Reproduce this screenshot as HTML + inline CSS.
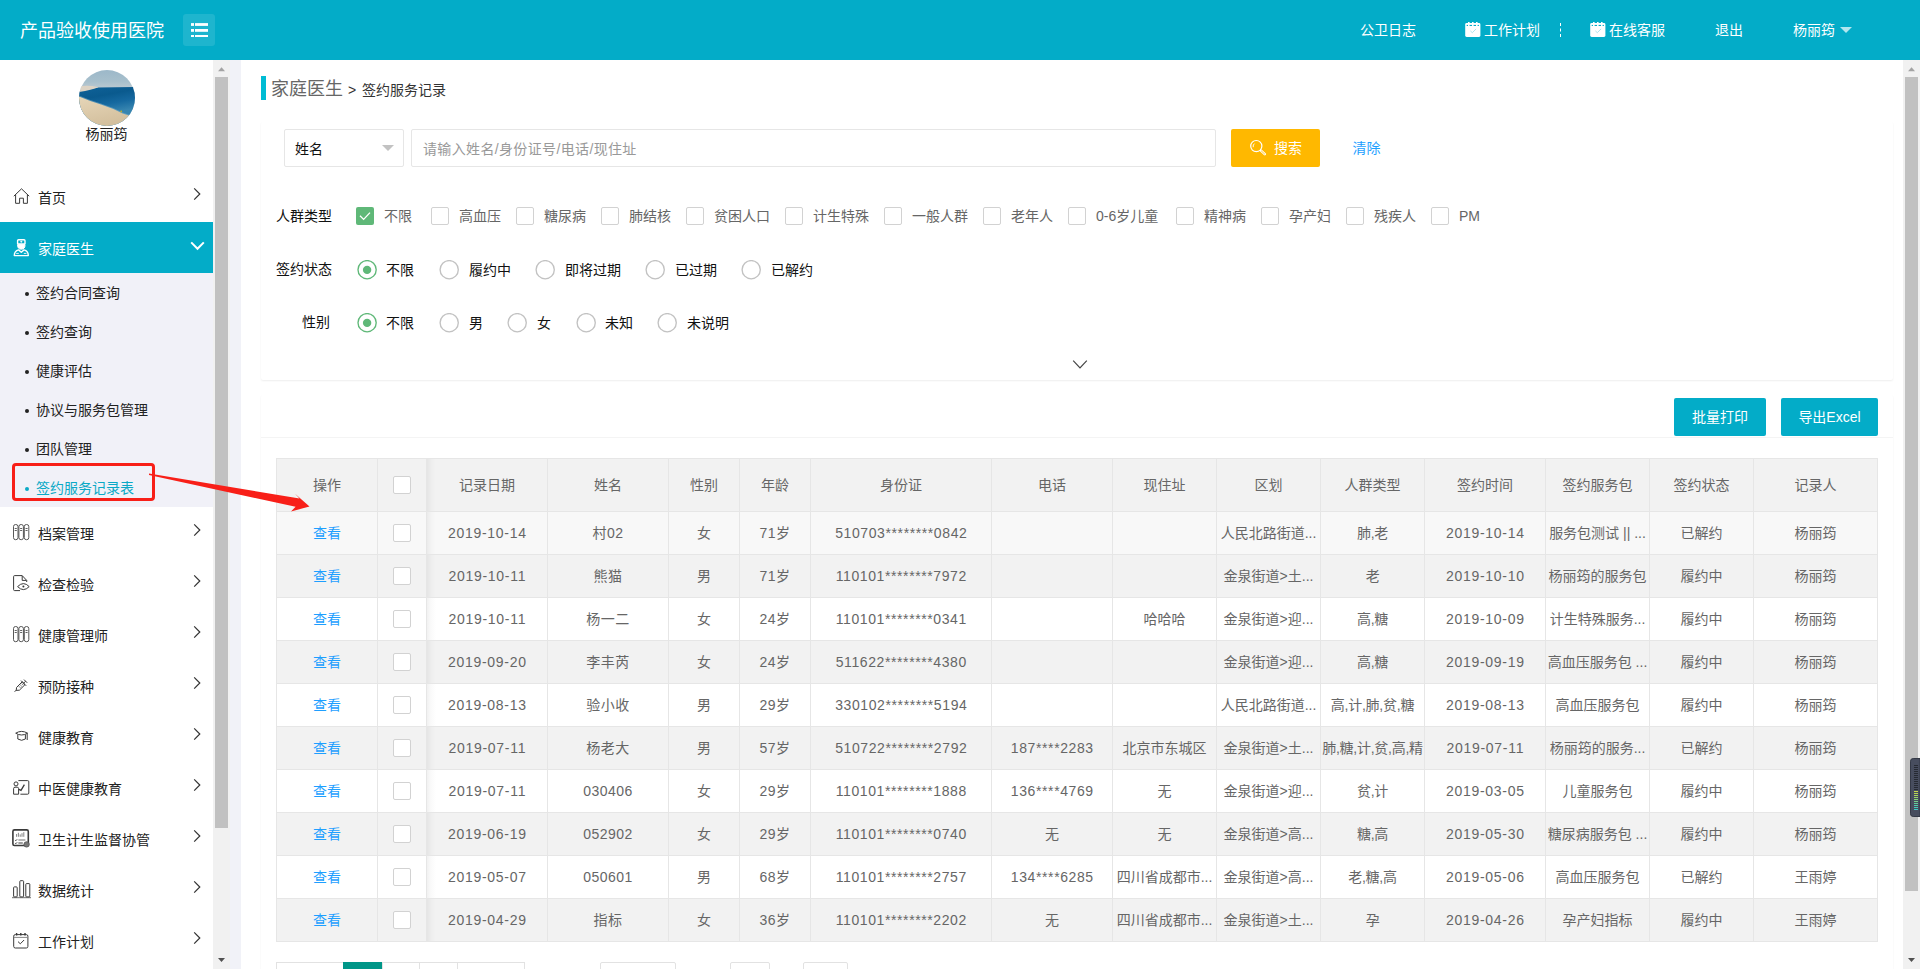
<!DOCTYPE html>
<html lang="zh-CN"><head><meta charset="utf-8"><title>签约服务记录</title>
<style>
*{box-sizing:border-box;margin:0;padding:0}
html,body{width:1920px;height:969px;overflow:hidden;background:#fff}
body{font-family:"Liberation Sans","Noto Sans CJK SC",sans-serif;font-size:14px;color:#666;position:relative}
.abs{position:absolute}
.t{position:absolute;white-space:nowrap;line-height:20px;height:20px}
#hdr{position:absolute;left:0;top:0;width:1920px;height:60px;background:#03acc8;color:#fff}
#side{position:absolute;left:0;top:60px;width:213px;height:909px;background:#fff;overflow:hidden}
.sb{position:absolute;top:60px;width:17px;height:909px;background:#f1f1f1}
.sb .th{position:absolute;left:2px;width:13px;background:#c1c1c1}
.sb svg{position:absolute;left:0}
.hl{height:1px;background:#e6e6e6}
.vl{width:1px;background:#e6e6e6}
.c{position:absolute;text-align:center;white-space:nowrap;color:#666;font-size:14px}
.c.lk{color:#1e9fff}
.c.n{letter-spacing:.45px}
.c.tg{letter-spacing:-.25px}
.c.n7{letter-spacing:.7px;text-indent:.7px}
.c.n6{letter-spacing:.6px;text-indent:.6px}
.cb{width:18px;height:18px;border:1px solid #d2d2d2;border-radius:2px;background:#fff}
.pgi{height:30px;line-height:30px;padding-top:1px;text-align:center;font-size:12px;overflow:hidden}
.card{background:#fff;border-radius:2px;box-shadow:0 1px 2px 0 rgba(0,0,0,.07)}
.inp{border:1px solid #e6e6e6;border-radius:2px;background:#fff}
.btn{height:38px;line-height:38px;background:#03acc8;color:#fff;text-align:center;border-radius:2px;font-size:14px}
</style></head><body>
<div id="hdr"><div class="t" style="left:20px;top:18px;font-size:18px;line-height:26px;height:26px">产品验收使用医院</div><div class="abs" style="left:183px;top:14px;width:32px;height:32px;border-radius:3px;background:rgba(255,255,255,.11)"><svg class="abs" style="left:8px;top:9px" width="17" height="14" viewBox="0 0 17 14"><g fill="#fff"><rect x="0" y="0.1" width="3" height="2.8"/><rect x="4" y="0.1" width="13" height="2.8"/><rect x="0" y="6" width="3" height="2.8"/><rect x="4" y="6" width="13" height="2.8"/><rect x="0" y="12" width="3" height="2"/><rect x="4" y="12" width="13" height="2"/></g></svg></div><div class="t" style="left:1360px;top:20px">公卫日志</div><svg class="abs" style="left:1465px;top:22px" width="16" height="15" viewBox="0 0 16 15"><rect x="0.2" y="1" width="15.2" height="14" rx="1.4" fill="#fff"/><g fill="#fff"><rect x="3" y="0" width="1.6" height="2"/><rect x="7" y="0" width="1.6" height="2"/><rect x="11" y="0" width="1.6" height="2"/></g><g fill="#03acc8"><rect x="1.7" y="2.9" width="1.3" height="1.1"/><rect x="4.6" y="2.9" width="2.4" height="1.1"/><rect x="8.6" y="2.9" width="2.4" height="1.1"/><rect x="12.6" y="2.9" width="1.3" height="1.1"/></g><path d="M5.4 8.9l1.9 1.8 3.8-3.8" fill="none" stroke="#a5e0ec" stroke-width="0.9"/></svg><div class="t" style="left:1484px;top:20px">工作计划</div><div class="abs" style="left:1560px;top:23px;width:0;height:14px;border-left:1px dashed #fff"></div><svg class="abs" style="left:1590px;top:22px" width="16" height="15" viewBox="0 0 16 15"><rect x="0.2" y="1" width="15.2" height="14" rx="1.4" fill="#fff"/><g fill="#fff"><rect x="3" y="0" width="1.6" height="2"/><rect x="7" y="0" width="1.6" height="2"/><rect x="11" y="0" width="1.6" height="2"/></g><g fill="#03acc8"><rect x="1.7" y="2.9" width="1.3" height="1.1"/><rect x="4.6" y="2.9" width="2.4" height="1.1"/><rect x="8.6" y="2.9" width="2.4" height="1.1"/><rect x="12.6" y="2.9" width="1.3" height="1.1"/></g><path d="M5.4 8.9l1.9 1.8 3.8-3.8" fill="none" stroke="#a5e0ec" stroke-width="0.9"/></svg><div class="t" style="left:1609px;top:20px">在线客服</div><div class="t" style="left:1715px;top:20px">退出</div><div class="t" style="left:1793px;top:20px">杨丽筠</div><div class="abs" style="left:1840px;top:27px;width:0;height:0;border:6px solid transparent;border-bottom-width:0;border-top:6px solid rgba(255,255,255,.7)"></div></div>
<div id="side"><svg class="abs" style="left:79px;top:10px" width="56" height="56" viewBox="0 0 56 56"><defs><clipPath id="av"><circle cx="28" cy="28" r="28"/></clipPath><linearGradient id="sky" x1="0" y1="0" x2="0" y2="1"><stop offset="0" stop-color="#9cb8c9"/><stop offset="0.2" stop-color="#a7bfcc"/><stop offset="0.31" stop-color="#b9c8d0"/><stop offset="1" stop-color="#b9c8d0"/></linearGradient><linearGradient id="sea" gradientUnits="userSpaceOnUse" x1="0" y1="17" x2="6" y2="48"><stop offset="0" stop-color="#3a8ab2"/><stop offset="0.1" stop-color="#0e6096"/><stop offset="0.4" stop-color="#0a5a8e"/><stop offset="0.7" stop-color="#1669a0"/><stop offset="1" stop-color="#3785b0"/></linearGradient><linearGradient id="sand" x1="0" y1="0" x2="0.4" y2="1"><stop offset="0" stop-color="#e6d6b8"/><stop offset="1" stop-color="#d3bf9d"/></linearGradient></defs><g clip-path="url(#av)"><rect width="56" height="56" fill="url(#sky)"/><path d="M0 21L19 17.6L56 17V56H0Z" fill="url(#sea)"/><path d="M0 16.4Q10 15 19.5 17.3Q13 20 0 22Z" fill="#ddd3c4"/><path d="M0 26.6Q10 31 22 34.6Q34 38.4 43.6 43.6L56 47.6V56H0Z" fill="#7fb0c8" opacity=".55" transform="translate(0.6,-0.9)"/><path d="M0 26.6Q10 31 22 34.6Q34 38.4 43.6 43.6L56 47.6V56H0Z" fill="url(#sand)"/><rect x="41.4" y="40.6" width="1.6" height="1.6" fill="#c2ad22"/></g></svg><div class="t" style="left:0;width:213px;text-align:center;top:64px;color:#222">杨丽筠</div><svg class="abs" style="left:12.6px;top:127.7px" width="17" height="17" viewBox="0 0 17 17" fill="none" stroke="#3a3a3a" stroke-width="1" ><path d="M0.8 8.2L8.5 0.8L16.2 8.2"/><path d="M2.6 6.6V15.3H6.6V10.2H10.4V15.3H14.4V6.6"/></svg><div class="t" style="left:38px;top:127.5px;color:#222">首页</div><svg class="abs" style="left:193px;top:126.5px" width="9" height="14" viewBox="0 0 9 14" fill="none" stroke="#333" stroke-width="1.2"><path d="M1.2 1.4L6.8 7L1.2 12.6"/></svg><div class="abs" style="left:0;top:162px;width:213px;height:51px;background:#03acc8"></div><svg class="abs" style="left:13.2px;top:179.1px" width="17" height="18" viewBox="0 0 17 18" fill="none" stroke="#fff" stroke-width="1.4"><path d="M4.6 5.2V1.8Q4.6 0.8 5.6 0.8H11Q12 0.8 12 1.8V5.2"/><path d="M7.3 2.7h2M8.3 1.8v1.8" stroke-width="0.9"/><path d="M4.6 4.8H12" stroke-width="1.1"/><path d="M4.6 5.6Q4.4 10.2 8.3 10.2Q12.2 10.2 12 5.6Z" fill="#fff" stroke-width="1"/><path d="M1.3 16.6Q1.3 12 5.6 10.9L8.3 13.2L11 10.9Q15.3 12 15.3 16.6Z" stroke-linejoin="round"/><path d="M3.2 14.4h2.6M10.8 14.4h2.6" stroke-width="0.9"/></svg><div class="t" style="left:38px;top:178.5px;color:#fff">家庭医生</div><svg class="abs" style="left:190px;top:180.5px" width="15" height="10" viewBox="0 0 15 10" fill="none" stroke="#fff" stroke-width="2"><path d="M1.2 1.4L7.5 7.8L13.8 1.4"/></svg><div class="abs" style="left:0;top:213px;width:213px;height:234px;background:#f1f1f8"></div><div class="abs" style="left:25px;top:232px;width:4px;height:4px;border-radius:2px;background:#222"></div><div class="t" style="left:36px;top:223px;color:#222">签约合同查询</div><div class="abs" style="left:25px;top:271px;width:4px;height:4px;border-radius:2px;background:#222"></div><div class="t" style="left:36px;top:262px;color:#222">签约查询</div><div class="abs" style="left:25px;top:310px;width:4px;height:4px;border-radius:2px;background:#222"></div><div class="t" style="left:36px;top:301px;color:#222">健康评估</div><div class="abs" style="left:25px;top:349px;width:4px;height:4px;border-radius:2px;background:#222"></div><div class="t" style="left:36px;top:340px;color:#222">协议与服务包管理</div><div class="abs" style="left:25px;top:388px;width:4px;height:4px;border-radius:2px;background:#222"></div><div class="t" style="left:36px;top:379px;color:#222">团队管理</div><div class="abs" style="left:25px;top:427px;width:4px;height:4px;border-radius:2px;background:#0ba9c6"></div><div class="t" style="left:36px;top:418px;color:#0ba9c6">签约服务记录表</div><svg class="abs" style="left:12.8px;top:463.9px" width="17" height="17" viewBox="0 0 17 17" fill="none" stroke="#3a3a3a" stroke-width="1" ><g stroke-width="0.85" stroke="#3a3a3a"><rect x="0.5" y="0.5" width="4.5" height="15.2" rx="2.1"/><rect x="5.9" y="0.5" width="4.5" height="15.2" rx="2.1"/><rect x="11.3" y="0.5" width="4.5" height="15.2" rx="2.1"/><path d="M1.7 4.5h2.1M1.7 6.5h2.1M7.1 4.5h2.1M7.1 6.5h2.1M12.5 4.5h2.1M12.5 6.5h2.1" stroke-width="0.8"/></g></svg><div class="t" style="left:38px;top:463.5px;color:#222">档案管理</div><svg class="abs" style="left:193px;top:462.5px" width="9" height="14" viewBox="0 0 9 14" fill="none" stroke="#333" stroke-width="1.2"><path d="M1.2 1.4L6.8 7L1.2 12.6"/></svg><svg class="abs" style="left:12.8px;top:514.9px" width="17" height="17" viewBox="0 0 17 17" fill="none" stroke="#3a3a3a" stroke-width="1" ><path d="M7 15.6H1.6Q0.6 15.6 0.6 14.6V1.6Q0.6 0.6 1.6 0.6H9.2L13.7 5.4V7"/><path d="M9.2 0.8V5.4H13.5"/><path d="M4.6 11.6Q10.4 5.6 16.2 11.6Q10.4 17.6 4.6 11.6Z" stroke-width="1"/><circle cx="10.4" cy="11.6" r="1" fill="#333" stroke="none"/></svg><div class="t" style="left:38px;top:514.5px;color:#222">检查检验</div><svg class="abs" style="left:193px;top:513.5px" width="9" height="14" viewBox="0 0 9 14" fill="none" stroke="#333" stroke-width="1.2"><path d="M1.2 1.4L6.8 7L1.2 12.6"/></svg><svg class="abs" style="left:12.8px;top:565.9px" width="17" height="17" viewBox="0 0 17 17" fill="none" stroke="#3a3a3a" stroke-width="1" ><g stroke-width="0.85" stroke="#3a3a3a"><rect x="0.5" y="0.5" width="4.5" height="15.2" rx="2.1"/><rect x="5.9" y="0.5" width="4.5" height="15.2" rx="2.1"/><rect x="11.3" y="0.5" width="4.5" height="15.2" rx="2.1"/><path d="M1.7 4.5h2.1M1.7 6.5h2.1M7.1 4.5h2.1M7.1 6.5h2.1M12.5 4.5h2.1M12.5 6.5h2.1" stroke-width="0.8"/></g></svg><div class="t" style="left:38px;top:565.5px;color:#222">健康管理师</div><svg class="abs" style="left:193px;top:564.5px" width="9" height="14" viewBox="0 0 9 14" fill="none" stroke="#333" stroke-width="1.2"><path d="M1.2 1.4L6.8 7L1.2 12.6"/></svg><svg class="abs" style="left:13.6px;top:619.1px" width="14" height="14" viewBox="0 0 14 14" fill="none" stroke="#3a3a3a" stroke-width="1" ><path d="M0.6 12.8L2.4 11"/><path d="M2.2 11.4L2.6 8.4L8.2 2.8L11 5.6L5.4 11.2Z"/><path d="M7 1.6L12.2 6.8"/><path d="M9.6 4.2L11.6 2.2"/><path d="M10 0.6L13.2 3.8"/><path d="M5 7.4l1.2 1.2M6.4 6l1.2 1.2M7.8 4.6l1.2 1.2" stroke-width="0.9"/></svg><div class="t" style="left:38px;top:616.5px;color:#222">预防接种</div><svg class="abs" style="left:193px;top:615.5px" width="9" height="14" viewBox="0 0 9 14" fill="none" stroke="#333" stroke-width="1.2"><path d="M1.2 1.4L6.8 7L1.2 12.6"/></svg><svg class="abs" style="left:14.5px;top:670.3px" width="14" height="12" viewBox="0 0 14 12" fill="none" stroke="#3a3a3a" stroke-width="1" ><path d="M0.7 3.2Q6.5 -0.4 12.6 3.2Q6.5 6.8 0.7 3.2Z"/><path d="M2.8 4.6V9Q6.6 11.6 10.4 9V4.6"/><path d="M12.2 3.4V10"/></svg><div class="t" style="left:38px;top:667.5px;color:#222">健康教育</div><svg class="abs" style="left:193px;top:666.5px" width="9" height="14" viewBox="0 0 9 14" fill="none" stroke="#333" stroke-width="1.2"><path d="M1.2 1.4L6.8 7L1.2 12.6"/></svg><svg class="abs" style="left:12.8px;top:720.1px" width="17" height="15" viewBox="0 0 17 15" fill="none" stroke="#3a3a3a" stroke-width="1" ><path d="M5.4 0.6H14.6Q15.8 0.6 15.8 1.8V13Q15.8 14.2 14.6 14.2H7.4"/><circle cx="3" cy="3.9" r="2"/><path d="M0.6 14.2V8.6Q0.6 7.2 2 7.2H4.2Q5.6 7.2 5.6 8.6V14.2Z"/><path d="M5.8 9.4L8 10.4L11.4 4.6" stroke-width="1.3"/></svg><div class="t" style="left:38px;top:718.5px;color:#222">中医健康教育</div><svg class="abs" style="left:193px;top:717.5px" width="9" height="14" viewBox="0 0 9 14" fill="none" stroke="#333" stroke-width="1.2"><path d="M1.2 1.4L6.8 7L1.2 12.6"/></svg><svg class="abs" style="left:11.6px;top:768.9px" width="19" height="19" viewBox="0 0 19 19" fill="none" stroke="#3a3a3a" stroke-width="1" ><rect x="0.9" y="0.9" width="15.4" height="15.6" rx="1.6" stroke-width="1.6"/><path d="M4.6 7.8V5M6.4 7.8V3.8M8.2 7.8V5.4M10 7.8V4.2M11.8 7.8V3.2" stroke-width="0.9" stroke="#777"/><path d="M6.4 11h7" stroke="#999" stroke-width="1.4"/><path d="M3 11l0.9 0.8 1.3-1.6M3 14l0.9 0.8 1.3-1.6" stroke-width="0.8"/><path d="M6.4 14h4.4"/><circle cx="14.6" cy="15.4" r="2.7" fill="#777" stroke="#555" stroke-width="0.8"/></svg><div class="t" style="left:38px;top:769.5px;color:#222">卫生计生监督协管</div><svg class="abs" style="left:193px;top:768.5px" width="9" height="14" viewBox="0 0 9 14" fill="none" stroke="#333" stroke-width="1.2"><path d="M1.2 1.4L6.8 7L1.2 12.6"/></svg><svg class="abs" style="left:12px;top:820.1px" width="19" height="19" viewBox="0 0 19 19" fill="none" stroke="#3a3a3a" stroke-width="1" ><path d="M0 17.6H19" stroke="#888" stroke-width="1.3"/><rect x="1.6" y="6.9" width="3.6" height="10" rx="0.8"/><rect x="7.8" y="0.7" width="3.8" height="16.2" rx="0.8"/><rect x="13.8" y="3.6" width="4" height="13.3" rx="0.8"/></svg><div class="t" style="left:38px;top:820.5px;color:#222">数据统计</div><svg class="abs" style="left:193px;top:819.5px" width="9" height="14" viewBox="0 0 9 14" fill="none" stroke="#333" stroke-width="1.2"><path d="M1.2 1.4L6.8 7L1.2 12.6"/></svg><svg class="abs" style="left:13px;top:873.1px" width="16" height="16" viewBox="0 0 16 16" fill="none" stroke="#3a3a3a" stroke-width="1" ><rect x="0.7" y="1.6" width="14.2" height="13.4" rx="1.6"/><path d="M0.8 4.4H14.8" stroke="#888"/><path d="M3.6 0V2.6M7.8 0V2.6M12 0V2.6" stroke-width="1.4"/><path d="M5 8.6l2.3 2.2 3.8-3.8"/></svg><div class="t" style="left:38px;top:871.5px;color:#222">工作计划</div><svg class="abs" style="left:193px;top:870.5px" width="9" height="14" viewBox="0 0 9 14" fill="none" stroke="#333" stroke-width="1.2"><path d="M1.2 1.4L6.8 7L1.2 12.6"/></svg></div>
<div class="sb" style="left:213px"><svg style="top:6px" width="17" height="6" viewBox="0 0 17 6"><path d="M5 5.2H12L8.5 1.2Z" fill="#a3a3a3"/></svg><div class="th" style="top:17px;height:751px"></div><svg style="bottom:6px" width="17" height="6" viewBox="0 0 17 6"><path d="M5 0.9H12L8.5 4.9Z" fill="#505050"/></svg></div>
<div class="abs" style="left:230px;top:60px;width:11px;height:909px;background:#f1f2f8"></div>
<div class="sb" style="left:1903px"><svg style="top:6px" width="17" height="6" viewBox="0 0 17 6"><path d="M5 5.2H12L8.5 1.2Z" fill="#a3a3a3"/></svg><div class="th" style="top:17px;height:814px"></div><svg style="bottom:6px" width="17" height="6" viewBox="0 0 17 6"><path d="M5 0.9H12L8.5 4.9Z" fill="#505050"/></svg></div>
<div class="abs" style="left:261px;top:76px;width:5px;height:24px;background:#00bcd4"></div><div class="t" style="left:271px;top:76px;font-size:18px;line-height:26px;height:26px;color:#666">家庭医生</div><div class="t" style="left:348px;top:80px;color:#333">&gt;</div><div class="t" style="left:362px;top:80px;color:#333">签约服务记录</div><div class="abs card" style="left:261px;top:122px;width:1632px;height:258px"></div><div class="abs inp" style="left:284px;top:129px;width:120px;height:38px"><div class="t" style="left:10px;top:9px;color:#111">姓名</div><div class="abs" style="left:97px;top:15px;width:0;height:0;border:6px solid transparent;border-bottom-width:0;border-top:6px solid #c2c2c2"></div></div><div class="abs inp" style="left:411px;top:129px;width:805px;height:38px"><div class="t" style="left:11px;top:9px;color:#999;letter-spacing:.355px">请输入姓名/身份证号/电话/现住址</div></div><div class="abs" style="left:1231px;top:129px;width:89px;height:38px;background:#ffb800;border-radius:2px;color:#fff"><svg class="abs" style="left:18px;top:10px" width="19" height="19" viewBox="0 0 19 19" fill="none" stroke="#fff"><circle cx="7.3" cy="7.1" r="5.6" stroke-width="1.2"/><path d="M4.2 8.2Q3.8 5.6 5.6 4.6" stroke-width="0.9"/><path d="M12 11.6L15.8 15.2" stroke-width="2.5" stroke-linecap="round"/><path d="M12.4 12L15.6 15" stroke="#ffb800" stroke-width="0.8" stroke-linecap="round"/></svg><div class="t" style="left:43px;top:9px">搜索</div></div><div class="t" style="left:1352.5px;top:138px;color:#1e9fff">清除</div><div class="t" style="left:276px;top:206px;color:#111">人群类型</div><div class="abs" style="left:356px;top:207px;width:18px;height:18px;border-radius:2px;background:#5fb878"><svg class="abs" style="left:3px;top:4px" width="12" height="10" viewBox="0 0 12 10" fill="none" stroke="#fff" stroke-width="1.3"><path d="M1 4.8L4.6 8.4L11 1.6"/></svg></div><div class="t" style="left:384px;top:206px">不限</div><div class="abs" style="left:431px;top:207px;width:18px;height:18px;border-radius:2px;border:1px solid #d2d2d2;background:#fff"></div><div class="t" style="left:459px;top:206px">高血压</div><div class="abs" style="left:516px;top:207px;width:18px;height:18px;border-radius:2px;border:1px solid #d2d2d2;background:#fff"></div><div class="t" style="left:544px;top:206px">糖尿病</div><div class="abs" style="left:601px;top:207px;width:18px;height:18px;border-radius:2px;border:1px solid #d2d2d2;background:#fff"></div><div class="t" style="left:629px;top:206px">肺结核</div><div class="abs" style="left:686px;top:207px;width:18px;height:18px;border-radius:2px;border:1px solid #d2d2d2;background:#fff"></div><div class="t" style="left:714px;top:206px">贫困人口</div><div class="abs" style="left:785px;top:207px;width:18px;height:18px;border-radius:2px;border:1px solid #d2d2d2;background:#fff"></div><div class="t" style="left:813px;top:206px">计生特殊</div><div class="abs" style="left:884px;top:207px;width:18px;height:18px;border-radius:2px;border:1px solid #d2d2d2;background:#fff"></div><div class="t" style="left:912px;top:206px">一般人群</div><div class="abs" style="left:983px;top:207px;width:18px;height:18px;border-radius:2px;border:1px solid #d2d2d2;background:#fff"></div><div class="t" style="left:1011px;top:206px">老年人</div><div class="abs" style="left:1068px;top:207px;width:18px;height:18px;border-radius:2px;border:1px solid #d2d2d2;background:#fff"></div><div class="t" style="left:1096px;top:206px">0-6岁儿童</div><div class="abs" style="left:1176px;top:207px;width:18px;height:18px;border-radius:2px;border:1px solid #d2d2d2;background:#fff"></div><div class="t" style="left:1204px;top:206px">精神病</div><div class="abs" style="left:1261px;top:207px;width:18px;height:18px;border-radius:2px;border:1px solid #d2d2d2;background:#fff"></div><div class="t" style="left:1289px;top:206px">孕产妇</div><div class="abs" style="left:1346px;top:207px;width:18px;height:18px;border-radius:2px;border:1px solid #d2d2d2;background:#fff"></div><div class="t" style="left:1374px;top:206px">残疾人</div><div class="abs" style="left:1431px;top:207px;width:18px;height:18px;border-radius:2px;border:1px solid #d2d2d2;background:#fff"></div><div class="t" style="left:1459px;top:206px">PM</div><div class="t" style="left:276px;top:259px;color:#111">签约状态</div><svg class="abs" style="left:357px;top:260px" width="20" height="20" viewBox="0 0 20 20"><circle cx="10.1" cy="9.7" r="9.1" fill="none" stroke="#5fb878" stroke-width="1.35"/><circle cx="10.1" cy="9.9" r="4.2" fill="#5fb878"/></svg><div class="t" style="left:386px;top:260px;color:#111">不限</div><svg class="abs" style="left:439px;top:260px" width="21" height="20" viewBox="0 0 21 20"><circle cx="10.2" cy="9.7" r="9.1" fill="none" stroke="#c2c2c2" stroke-width="1.35"/></svg><div class="t" style="left:469px;top:260px;color:#111">履约中</div><svg class="abs" style="left:535px;top:260px" width="21" height="20" viewBox="0 0 21 20"><circle cx="10.2" cy="9.7" r="9.1" fill="none" stroke="#c2c2c2" stroke-width="1.35"/></svg><div class="t" style="left:565px;top:260px;color:#111">即将过期</div><svg class="abs" style="left:645px;top:260px" width="21" height="20" viewBox="0 0 21 20"><circle cx="10.2" cy="9.7" r="9.1" fill="none" stroke="#c2c2c2" stroke-width="1.35"/></svg><div class="t" style="left:675px;top:260px;color:#111">已过期</div><svg class="abs" style="left:741px;top:260px" width="21" height="20" viewBox="0 0 21 20"><circle cx="10.2" cy="9.7" r="9.1" fill="none" stroke="#c2c2c2" stroke-width="1.35"/></svg><div class="t" style="left:771px;top:260px;color:#111">已解约</div><div class="t" style="left:302px;top:312px;color:#111">性别</div><svg class="abs" style="left:357px;top:313px" width="20" height="20" viewBox="0 0 20 20"><circle cx="10.1" cy="9.7" r="9.1" fill="none" stroke="#5fb878" stroke-width="1.35"/><circle cx="10.1" cy="9.9" r="4.2" fill="#5fb878"/></svg><div class="t" style="left:386px;top:313px;color:#111">不限</div><svg class="abs" style="left:439px;top:313px" width="21" height="20" viewBox="0 0 21 20"><circle cx="10.2" cy="9.7" r="9.1" fill="none" stroke="#c2c2c2" stroke-width="1.35"/></svg><div class="t" style="left:469px;top:313px;color:#111">男</div><svg class="abs" style="left:507px;top:313px" width="21" height="20" viewBox="0 0 21 20"><circle cx="10.2" cy="9.7" r="9.1" fill="none" stroke="#c2c2c2" stroke-width="1.35"/></svg><div class="t" style="left:537px;top:313px;color:#111">女</div><svg class="abs" style="left:576px;top:313px" width="21" height="20" viewBox="0 0 21 20"><circle cx="10.2" cy="9.7" r="9.1" fill="none" stroke="#c2c2c2" stroke-width="1.35"/></svg><div class="t" style="left:605px;top:313px;color:#111">未知</div><svg class="abs" style="left:657px;top:313px" width="21" height="20" viewBox="0 0 21 20"><circle cx="10.2" cy="9.7" r="9.1" fill="none" stroke="#c2c2c2" stroke-width="1.35"/></svg><div class="t" style="left:687px;top:313px;color:#111">未说明</div><svg class="abs" style="left:1072px;top:359px" width="16" height="11" viewBox="0 0 16 11" fill="none" stroke="#444" stroke-width="1.2"><path d="M1.2 1.6L8 8.8L14.8 1.6"/></svg><div class="abs card" style="left:261px;top:395px;width:1632px;height:600px"></div><div class="abs" style="left:261px;top:437px;width:1632px;height:1px;background:#f4f4f4"></div><div class="abs btn" style="left:1674px;top:398px;width:92px">批量打印</div><div class="abs btn" style="left:1781px;top:398px;width:97px">导出Excel</div><div class="abs" style="left:276px;top:458px;width:1602px;height:53px;background:#f2f2f2"></div><div class="abs" style="left:276px;top:511px;width:1602px;height:43px;background:#f8f8f8"></div><div class="abs" style="left:276px;top:554px;width:1602px;height:43px;background:#f2f2f2"></div><div class="abs" style="left:276px;top:597px;width:1602px;height:43px;background:#fff"></div><div class="abs" style="left:276px;top:640px;width:1602px;height:43px;background:#f2f2f2"></div><div class="abs" style="left:276px;top:683px;width:1602px;height:43px;background:#fff"></div><div class="abs" style="left:276px;top:726px;width:1602px;height:43px;background:#f2f2f2"></div><div class="abs" style="left:276px;top:769px;width:1602px;height:43px;background:#fff"></div><div class="abs" style="left:276px;top:812px;width:1602px;height:43px;background:#f2f2f2"></div><div class="abs" style="left:276px;top:855px;width:1602px;height:43px;background:#fff"></div><div class="abs" style="left:276px;top:898px;width:1602px;height:43px;background:#f2f2f2"></div><div class="abs" style="left:427px;top:459px;width:9px;height:482px;background:linear-gradient(90deg,rgba(0,0,0,.055),rgba(0,0,0,.02) 45%,rgba(0,0,0,0))"></div><div class="abs hl" style="left:276px;top:458px;width:1602px"></div><div class="abs hl" style="left:276px;top:511px;width:1602px"></div><div class="abs hl" style="left:276px;top:554px;width:1602px"></div><div class="abs hl" style="left:276px;top:597px;width:1602px"></div><div class="abs hl" style="left:276px;top:640px;width:1602px"></div><div class="abs hl" style="left:276px;top:683px;width:1602px"></div><div class="abs hl" style="left:276px;top:726px;width:1602px"></div><div class="abs hl" style="left:276px;top:769px;width:1602px"></div><div class="abs hl" style="left:276px;top:812px;width:1602px"></div><div class="abs hl" style="left:276px;top:855px;width:1602px"></div><div class="abs hl" style="left:276px;top:898px;width:1602px"></div><div class="abs hl" style="left:276px;top:941px;width:1602px"></div><div class="abs vl" style="left:276px;top:458px;height:484px"></div><div class="abs vl" style="left:377px;top:458px;height:484px"></div><div class="abs vl" style="left:426px;top:458px;height:484px"></div><div class="abs vl" style="left:547px;top:458px;height:484px"></div><div class="abs vl" style="left:668px;top:458px;height:484px"></div><div class="abs vl" style="left:739px;top:458px;height:484px"></div><div class="abs vl" style="left:810px;top:458px;height:484px"></div><div class="abs vl" style="left:991px;top:458px;height:484px"></div><div class="abs vl" style="left:1112px;top:458px;height:484px"></div><div class="abs vl" style="left:1216px;top:458px;height:484px"></div><div class="abs vl" style="left:1320px;top:458px;height:484px"></div><div class="abs vl" style="left:1424px;top:458px;height:484px"></div><div class="abs vl" style="left:1545px;top:458px;height:484px"></div><div class="abs vl" style="left:1649px;top:458px;height:484px"></div><div class="abs vl" style="left:1753px;top:458px;height:484px"></div><div class="abs vl" style="left:1877px;top:458px;height:484px"></div><div class="c " style="left:277px;top:459px;width:100px;height:52px;line-height:52px">操作</div><div class="abs cb" style="left:393px;top:476px"></div><div class="c " style="left:427px;top:459px;width:120px;height:52px;line-height:52px">记录日期</div><div class="c " style="left:548px;top:459px;width:120px;height:52px;line-height:52px">姓名</div><div class="c " style="left:669px;top:459px;width:70px;height:52px;line-height:52px">性别</div><div class="c " style="left:740px;top:459px;width:70px;height:52px;line-height:52px">年龄</div><div class="c " style="left:811px;top:459px;width:180px;height:52px;line-height:52px">身份证</div><div class="c " style="left:992px;top:459px;width:120px;height:52px;line-height:52px">电话</div><div class="c " style="left:1113px;top:459px;width:103px;height:52px;line-height:52px">现住址</div><div class="c " style="left:1217px;top:459px;width:103px;height:52px;line-height:52px">区划</div><div class="c " style="left:1321px;top:459px;width:103px;height:52px;line-height:52px">人群类型</div><div class="c " style="left:1425px;top:459px;width:120px;height:52px;line-height:52px">签约时间</div><div class="c " style="left:1546px;top:459px;width:103px;height:52px;line-height:52px">签约服务包</div><div class="c " style="left:1650px;top:459px;width:103px;height:52px;line-height:52px">签约状态</div><div class="c " style="left:1754px;top:459px;width:123px;height:52px;line-height:52px">记录人</div><div class="c lk" style="left:277px;top:512px;width:100px;height:42px;line-height:42px">查看</div><div class="abs cb" style="left:393px;top:524px"></div><div class="c n7" style="left:427px;top:512px;width:120px;height:42px;line-height:42px">2019-10-14</div><div class="c n" style="left:548px;top:512px;width:120px;height:42px;line-height:42px">村02</div><div class="c " style="left:669px;top:512px;width:70px;height:42px;line-height:42px">女</div><div class="c n" style="left:740px;top:512px;width:70px;height:42px;line-height:42px">71岁</div><div class="c n6" style="left:811px;top:512px;width:180px;height:42px;line-height:42px">510703********0842</div><div class="c " style="left:1217px;top:512px;width:103px;height:42px;line-height:42px">人民北路街道...</div><div class="c tg" style="left:1321px;top:512px;width:103px;height:42px;line-height:42px">肺,老</div><div class="c n7" style="left:1425px;top:512px;width:120px;height:42px;line-height:42px">2019-10-14</div><div class="c " style="left:1546px;top:512px;width:103px;height:42px;line-height:42px">服务包测试 || ...</div><div class="c " style="left:1650px;top:512px;width:103px;height:42px;line-height:42px">已解约</div><div class="c " style="left:1754px;top:512px;width:123px;height:42px;line-height:42px">杨丽筠</div><div class="c lk" style="left:277px;top:555px;width:100px;height:42px;line-height:42px">查看</div><div class="abs cb" style="left:393px;top:567px"></div><div class="c n7" style="left:427px;top:555px;width:120px;height:42px;line-height:42px">2019-10-11</div><div class="c n" style="left:548px;top:555px;width:120px;height:42px;line-height:42px">熊猫</div><div class="c " style="left:669px;top:555px;width:70px;height:42px;line-height:42px">男</div><div class="c n" style="left:740px;top:555px;width:70px;height:42px;line-height:42px">71岁</div><div class="c n6" style="left:811px;top:555px;width:180px;height:42px;line-height:42px">110101********7972</div><div class="c " style="left:1217px;top:555px;width:103px;height:42px;line-height:42px">金泉街道&gt;土...</div><div class="c tg" style="left:1321px;top:555px;width:103px;height:42px;line-height:42px">老</div><div class="c n7" style="left:1425px;top:555px;width:120px;height:42px;line-height:42px">2019-10-10</div><div class="c " style="left:1546px;top:555px;width:103px;height:42px;line-height:42px">杨丽筠的服务包</div><div class="c " style="left:1650px;top:555px;width:103px;height:42px;line-height:42px">履约中</div><div class="c " style="left:1754px;top:555px;width:123px;height:42px;line-height:42px">杨丽筠</div><div class="c lk" style="left:277px;top:598px;width:100px;height:42px;line-height:42px">查看</div><div class="abs cb" style="left:393px;top:610px"></div><div class="c n7" style="left:427px;top:598px;width:120px;height:42px;line-height:42px">2019-10-11</div><div class="c n" style="left:548px;top:598px;width:120px;height:42px;line-height:42px">杨一二</div><div class="c " style="left:669px;top:598px;width:70px;height:42px;line-height:42px">女</div><div class="c n" style="left:740px;top:598px;width:70px;height:42px;line-height:42px">24岁</div><div class="c n6" style="left:811px;top:598px;width:180px;height:42px;line-height:42px">110101********0341</div><div class="c " style="left:1113px;top:598px;width:103px;height:42px;line-height:42px">哈哈哈</div><div class="c " style="left:1217px;top:598px;width:103px;height:42px;line-height:42px">金泉街道&gt;迎...</div><div class="c tg" style="left:1321px;top:598px;width:103px;height:42px;line-height:42px">高,糖</div><div class="c n7" style="left:1425px;top:598px;width:120px;height:42px;line-height:42px">2019-10-09</div><div class="c " style="left:1546px;top:598px;width:103px;height:42px;line-height:42px">计生特殊服务...</div><div class="c " style="left:1650px;top:598px;width:103px;height:42px;line-height:42px">履约中</div><div class="c " style="left:1754px;top:598px;width:123px;height:42px;line-height:42px">杨丽筠</div><div class="c lk" style="left:277px;top:641px;width:100px;height:42px;line-height:42px">查看</div><div class="abs cb" style="left:393px;top:653px"></div><div class="c n7" style="left:427px;top:641px;width:120px;height:42px;line-height:42px">2019-09-20</div><div class="c n" style="left:548px;top:641px;width:120px;height:42px;line-height:42px">李丰芮</div><div class="c " style="left:669px;top:641px;width:70px;height:42px;line-height:42px">女</div><div class="c n" style="left:740px;top:641px;width:70px;height:42px;line-height:42px">24岁</div><div class="c n6" style="left:811px;top:641px;width:180px;height:42px;line-height:42px">511622********4380</div><div class="c " style="left:1217px;top:641px;width:103px;height:42px;line-height:42px">金泉街道&gt;迎...</div><div class="c tg" style="left:1321px;top:641px;width:103px;height:42px;line-height:42px">高,糖</div><div class="c n7" style="left:1425px;top:641px;width:120px;height:42px;line-height:42px">2019-09-19</div><div class="c " style="left:1546px;top:641px;width:103px;height:42px;line-height:42px">高血压服务包 ...</div><div class="c " style="left:1650px;top:641px;width:103px;height:42px;line-height:42px">履约中</div><div class="c " style="left:1754px;top:641px;width:123px;height:42px;line-height:42px">杨丽筠</div><div class="c lk" style="left:277px;top:684px;width:100px;height:42px;line-height:42px">查看</div><div class="abs cb" style="left:393px;top:696px"></div><div class="c n7" style="left:427px;top:684px;width:120px;height:42px;line-height:42px">2019-08-13</div><div class="c n" style="left:548px;top:684px;width:120px;height:42px;line-height:42px">验小收</div><div class="c " style="left:669px;top:684px;width:70px;height:42px;line-height:42px">男</div><div class="c n" style="left:740px;top:684px;width:70px;height:42px;line-height:42px">29岁</div><div class="c n6" style="left:811px;top:684px;width:180px;height:42px;line-height:42px">330102********5194</div><div class="c " style="left:1217px;top:684px;width:103px;height:42px;line-height:42px">人民北路街道...</div><div class="c tg" style="left:1321px;top:684px;width:103px;height:42px;line-height:42px">高,计,肺,贫,糖</div><div class="c n7" style="left:1425px;top:684px;width:120px;height:42px;line-height:42px">2019-08-13</div><div class="c " style="left:1546px;top:684px;width:103px;height:42px;line-height:42px">高血压服务包</div><div class="c " style="left:1650px;top:684px;width:103px;height:42px;line-height:42px">履约中</div><div class="c " style="left:1754px;top:684px;width:123px;height:42px;line-height:42px">杨丽筠</div><div class="c lk" style="left:277px;top:727px;width:100px;height:42px;line-height:42px">查看</div><div class="abs cb" style="left:393px;top:739px"></div><div class="c n7" style="left:427px;top:727px;width:120px;height:42px;line-height:42px">2019-07-11</div><div class="c n" style="left:548px;top:727px;width:120px;height:42px;line-height:42px">杨老大</div><div class="c " style="left:669px;top:727px;width:70px;height:42px;line-height:42px">男</div><div class="c n" style="left:740px;top:727px;width:70px;height:42px;line-height:42px">57岁</div><div class="c n6" style="left:811px;top:727px;width:180px;height:42px;line-height:42px">510722********2792</div><div class="c n6" style="left:992px;top:727px;width:120px;height:42px;line-height:42px">187****2283</div><div class="c " style="left:1113px;top:727px;width:103px;height:42px;line-height:42px">北京市东城区</div><div class="c " style="left:1217px;top:727px;width:103px;height:42px;line-height:42px">金泉街道&gt;土...</div><div class="c tg" style="left:1321px;top:727px;width:103px;height:42px;line-height:42px">肺,糖,计,贫,高,精</div><div class="c n7" style="left:1425px;top:727px;width:120px;height:42px;line-height:42px">2019-07-11</div><div class="c " style="left:1546px;top:727px;width:103px;height:42px;line-height:42px">杨丽筠的服务...</div><div class="c " style="left:1650px;top:727px;width:103px;height:42px;line-height:42px">已解约</div><div class="c " style="left:1754px;top:727px;width:123px;height:42px;line-height:42px">杨丽筠</div><div class="c lk" style="left:277px;top:770px;width:100px;height:42px;line-height:42px">查看</div><div class="abs cb" style="left:393px;top:782px"></div><div class="c n7" style="left:427px;top:770px;width:120px;height:42px;line-height:42px">2019-07-11</div><div class="c n" style="left:548px;top:770px;width:120px;height:42px;line-height:42px">030406</div><div class="c " style="left:669px;top:770px;width:70px;height:42px;line-height:42px">女</div><div class="c n" style="left:740px;top:770px;width:70px;height:42px;line-height:42px">29岁</div><div class="c n6" style="left:811px;top:770px;width:180px;height:42px;line-height:42px">110101********1888</div><div class="c n6" style="left:992px;top:770px;width:120px;height:42px;line-height:42px">136****4769</div><div class="c " style="left:1113px;top:770px;width:103px;height:42px;line-height:42px">无</div><div class="c " style="left:1217px;top:770px;width:103px;height:42px;line-height:42px">金泉街道&gt;迎...</div><div class="c tg" style="left:1321px;top:770px;width:103px;height:42px;line-height:42px">贫,计</div><div class="c n7" style="left:1425px;top:770px;width:120px;height:42px;line-height:42px">2019-03-05</div><div class="c " style="left:1546px;top:770px;width:103px;height:42px;line-height:42px">儿童服务包</div><div class="c " style="left:1650px;top:770px;width:103px;height:42px;line-height:42px">履约中</div><div class="c " style="left:1754px;top:770px;width:123px;height:42px;line-height:42px">杨丽筠</div><div class="c lk" style="left:277px;top:813px;width:100px;height:42px;line-height:42px">查看</div><div class="abs cb" style="left:393px;top:825px"></div><div class="c n7" style="left:427px;top:813px;width:120px;height:42px;line-height:42px">2019-06-19</div><div class="c n" style="left:548px;top:813px;width:120px;height:42px;line-height:42px">052902</div><div class="c " style="left:669px;top:813px;width:70px;height:42px;line-height:42px">女</div><div class="c n" style="left:740px;top:813px;width:70px;height:42px;line-height:42px">29岁</div><div class="c n6" style="left:811px;top:813px;width:180px;height:42px;line-height:42px">110101********0740</div><div class="c n6" style="left:992px;top:813px;width:120px;height:42px;line-height:42px">无</div><div class="c " style="left:1113px;top:813px;width:103px;height:42px;line-height:42px">无</div><div class="c " style="left:1217px;top:813px;width:103px;height:42px;line-height:42px">金泉街道&gt;高...</div><div class="c tg" style="left:1321px;top:813px;width:103px;height:42px;line-height:42px">糖,高</div><div class="c n7" style="left:1425px;top:813px;width:120px;height:42px;line-height:42px">2019-05-30</div><div class="c " style="left:1546px;top:813px;width:103px;height:42px;line-height:42px">糖尿病服务包 ...</div><div class="c " style="left:1650px;top:813px;width:103px;height:42px;line-height:42px">履约中</div><div class="c " style="left:1754px;top:813px;width:123px;height:42px;line-height:42px">杨丽筠</div><div class="c lk" style="left:277px;top:856px;width:100px;height:42px;line-height:42px">查看</div><div class="abs cb" style="left:393px;top:868px"></div><div class="c n7" style="left:427px;top:856px;width:120px;height:42px;line-height:42px">2019-05-07</div><div class="c n" style="left:548px;top:856px;width:120px;height:42px;line-height:42px">050601</div><div class="c " style="left:669px;top:856px;width:70px;height:42px;line-height:42px">男</div><div class="c n" style="left:740px;top:856px;width:70px;height:42px;line-height:42px">68岁</div><div class="c n6" style="left:811px;top:856px;width:180px;height:42px;line-height:42px">110101********2757</div><div class="c n6" style="left:992px;top:856px;width:120px;height:42px;line-height:42px">134****6285</div><div class="c " style="left:1113px;top:856px;width:103px;height:42px;line-height:42px">四川省成都市...</div><div class="c " style="left:1217px;top:856px;width:103px;height:42px;line-height:42px">金泉街道&gt;高...</div><div class="c tg" style="left:1321px;top:856px;width:103px;height:42px;line-height:42px">老,糖,高</div><div class="c n7" style="left:1425px;top:856px;width:120px;height:42px;line-height:42px">2019-05-06</div><div class="c " style="left:1546px;top:856px;width:103px;height:42px;line-height:42px">高血压服务包</div><div class="c " style="left:1650px;top:856px;width:103px;height:42px;line-height:42px">已解约</div><div class="c " style="left:1754px;top:856px;width:123px;height:42px;line-height:42px">王雨婷</div><div class="c lk" style="left:277px;top:899px;width:100px;height:42px;line-height:42px">查看</div><div class="abs cb" style="left:393px;top:911px"></div><div class="c n7" style="left:427px;top:899px;width:120px;height:42px;line-height:42px">2019-04-29</div><div class="c n" style="left:548px;top:899px;width:120px;height:42px;line-height:42px">指标</div><div class="c " style="left:669px;top:899px;width:70px;height:42px;line-height:42px">女</div><div class="c n" style="left:740px;top:899px;width:70px;height:42px;line-height:42px">36岁</div><div class="c n6" style="left:811px;top:899px;width:180px;height:42px;line-height:42px">110101********2202</div><div class="c n6" style="left:992px;top:899px;width:120px;height:42px;line-height:42px">无</div><div class="c " style="left:1113px;top:899px;width:103px;height:42px;line-height:42px">四川省成都市...</div><div class="c " style="left:1217px;top:899px;width:103px;height:42px;line-height:42px">金泉街道&gt;土...</div><div class="c tg" style="left:1321px;top:899px;width:103px;height:42px;line-height:42px">孕</div><div class="c n7" style="left:1425px;top:899px;width:120px;height:42px;line-height:42px">2019-04-26</div><div class="c " style="left:1546px;top:899px;width:103px;height:42px;line-height:42px">孕产妇指标</div><div class="c " style="left:1650px;top:899px;width:103px;height:42px;line-height:42px">履约中</div><div class="c " style="left:1754px;top:899px;width:123px;height:42px;line-height:42px">王雨婷</div><div class="abs pgi" style="left:276px;top:962px;width:68px;background:#fff;border:1px solid #e2e2e2;color:#333;">上一页</div><div class="abs pgi" style="left:343px;top:962px;width:39px;background:#009688;color:#fff;">1</div><div class="abs pgi" style="left:382px;top:962px;width:38px;background:#fff;border:1px solid #e2e2e2;color:#333;">2</div><div class="abs pgi" style="left:419px;top:962px;width:39px;background:#fff;border:1px solid #e2e2e2;color:#333;">3</div><div class="abs pgi" style="left:457px;top:962px;width:68px;background:#fff;border:1px solid #e2e2e2;color:#333;">下一页</div><div class="abs pgi" style="left:600px;top:962px;width:76px;border:1px solid #e2e2e2;border-radius:2px;color:#333">10 条/页</div><div class="abs pgi" style="left:690px;top:962px;width:36px;color:#333">到第</div><div class="abs pgi" style="left:730px;top:962px;width:40px;border:1px solid #e2e2e2;border-radius:2px;color:#333">1</div><div class="abs pgi" style="left:776px;top:962px;width:20px;color:#333">页</div><div class="abs pgi" style="left:803px;top:962px;width:45px;border:1px solid #e2e2e2;border-radius:2px;color:#333">确定</div><div class="abs" style="left:12px;top:463px;width:143px;height:38px;border:3px solid #f81f18;border-radius:4px"></div><svg class="abs" style="left:140px;top:465px" width="180" height="55" viewBox="140 465 180 55"><path d="M149 473.6L299.5 498.4L295 493.8L309.5 506.6L291 511.4L295.6 506.8L149 475Z" fill="#f81f18"/></svg><svg class="abs" style="left:1910px;top:758px" width="10" height="59" viewBox="0 0 10 59"><path d="M10 0.5H3.2Q0.5 0.5 0.5 3.2V55.8Q0.5 58.5 3.2 58.5H10Z" fill="#474d5e" stroke="#343946" stroke-width="1"/><g shape-rendering="crispEdges"><rect x="4" y="7" width="4" height="1" fill="#262a33"/><rect x="4" y="9" width="4" height="1" fill="#262a33"/><rect x="4" y="11" width="4" height="1" fill="#262a33"/><rect x="4" y="13" width="4" height="1" fill="#262a33"/><rect x="4" y="15" width="4" height="1" fill="#262a33"/><rect x="4" y="17" width="4" height="1" fill="#262a33"/><rect x="4" y="19" width="4" height="1" fill="#262a33"/><rect x="4" y="21" width="4" height="1" fill="#262a33"/><rect x="4" y="23" width="4" height="1" fill="#262a33"/><rect x="4" y="25" width="4" height="1" fill="#262a33"/><rect x="4" y="27" width="4" height="1" fill="#262a33"/><rect x="4" y="29" width="4" height="1" fill="#262a33"/><rect x="4" y="31" width="4" height="1" fill="#262a33"/><rect x="4" y="33" width="4" height="1" fill="#c6d94c"/><rect x="4" y="35" width="4" height="1" fill="#b9d752"/><rect x="4" y="37" width="4" height="1" fill="#a9d65c"/><rect x="4" y="39" width="4" height="1" fill="#98d568"/><rect x="4" y="41" width="4" height="1" fill="#86d477"/><rect x="4" y="43" width="4" height="1" fill="#74d288"/><rect x="4" y="45" width="4" height="1" fill="#62d09a"/><rect x="4" y="47" width="4" height="1" fill="#52ceaa"/><rect x="4" y="49" width="4" height="1" fill="#45ccb8"/><rect x="4" y="51" width="4" height="1" fill="#3ecbc4"/></g></svg></body></html>
